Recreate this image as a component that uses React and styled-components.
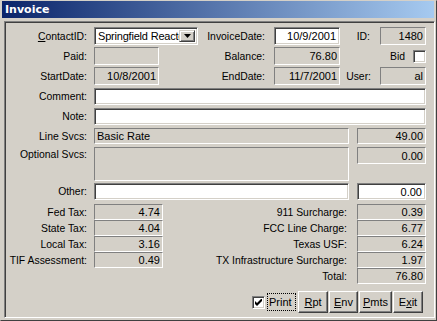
import React from "react";
import styled, { createGlobalStyle } from "styled-components";

const GlobalStyle = createGlobalStyle`
  html, body { margin: 0; padding: 0; background: #D4D0C8; }
  body { font-family: "Liberation Sans", Arial, sans-serif; font-size: 11px; color: #000; }
  * { box-sizing: border-box; }
`;

const Window = styled.div`
  width: 437px;
  height: 321px;
  background: #d4d0c8;
  border-style: solid;
  border-width: 1px;
  border-color: #d4d0c8 #404040 #404040 #d4d0c8;
  padding: 0 1px 2px 1px;
  display: flex;
  flex-direction: column;
`;

const TitleBar = styled.div`
  height: 17px;
  flex: none;
  margin-right: 1px;
  background: linear-gradient(to right, #0a246a, #a6caf0);
  color: #fff;
  font-family: "DejaVu Sans", Tahoma, sans-serif;
  font-weight: bold;
  font-size: 11px;
  display: flex;
  align-items: center;
  padding-left: 3px;
`;

const Panel = styled.div`
  margin: 3px 0 0 2px;
  height: 297px;
  width: 431px;
  flex: none;
  border: 1px solid;
  border-color: #808080 #fff #fff #808080;
  box-shadow: inset 1px 1px #404040, inset -1px -1px #d4d0c8;
  padding: 5px 0 0 1px;
  display: flex;
  flex-direction: column;
`;

const Row = styled.div`
  display: flex;
  align-items: ${(p) => (p.$top ? "flex-start" : "center")};
  height: ${(p) => p.$h}px;
  margin-top: ${(p) => p.$mt || 0}px;
  flex: none;
`;

const Label = styled.div`
  flex: none;
  width: ${(p) => p.$w}px;
  margin-right: ${(p) => p.$gap}px;
  height: ${(p) => (p.$lh ? `${p.$lh}px` : "auto")};
  line-height: ${(p) => (p.$lh ? `${p.$lh}px` : "normal")};
  text-align: right;
  white-space: nowrap;
  font-size: 10.4px;
`;

const Spacer = styled.div`
  flex: none;
  width: ${(p) => p.$w}px;
`;

const Static = styled.div`
  flex: none;
  width: ${(p) => p.$w}px;
  height: ${(p) => (p.$h ? `${p.$h}px` : "100%")};
  background: #d4d0c8;
  border: 1px solid;
  border-color: #808080 #fff #fff #808080;
  display: flex;
  align-items: ${(p) => (p.$top ? "flex-start" : "center")};
  justify-content: ${(p) => (p.$left ? "flex-start" : "flex-end")};
  padding: 0 2px 0 2px;
  white-space: nowrap;
  overflow: hidden;
`;

const Edit = styled.div`
  flex: none;
  width: ${(p) => p.$w}px;
  height: 100%;
  background: #fff;
  border: 1px solid;
  border-color: #808080 #fff #fff #808080;
  box-shadow: inset 1px 1px #404040, inset -1px -1px #d4d0c8;
  display: flex;
  align-items: center;
  justify-content: flex-end;
  padding: 0 3px 0 3px;
  white-space: nowrap;
  overflow: hidden;
`;

const Combo = styled(Edit)`
  justify-content: space-between;
  padding: 2px 2px 2px 3px;
`;

const ComboText = styled.span`
  overflow: hidden;
  white-space: nowrap;
  flex: 1;
  min-width: 0;
  font-size: 11px;
  letter-spacing: -0.2px;
`;

const DropButton = styled.div`
  flex: none;
  width: 16px;
  height: 100%;
  background: #d4d0c8;
  border: 1px solid;
  border-color: #d4d0c8 #404040 #404040 #d4d0c8;
  box-shadow: inset 1px 1px #fff, inset -1px -1px #808080;
  display: flex;
  align-items: center;
  justify-content: center;
`;

const CheckBox = styled.div`
  flex: none;
  width: 13px;
  height: 13px;
  background: #fff;
  border: 1px solid;
  border-color: #808080 #fff #fff #808080;
  box-shadow: inset 1px 1px #404040, inset -1px -1px #d4d0c8;
  display: flex;
  align-items: center;
  justify-content: center;
`;

const ButtonBar = styled.div`
  display: flex;
  align-items: center;
  height: 22px;
  margin-top: 7px;
  padding-left: 246px;
`;

const FocusLabel = styled.div`
  margin-left: 2px;
  margin-right: 2px;
  padding: 2px 1px;
  height: 18px;
  line-height: 13px;
  border: 1px dotted #000;
  width: 29px;
  font-size: 11px;
`;

const Button = styled.div`
  flex: none;
  width: ${(p) => p.$w}px;
  height: 22px;
  margin-left: ${(p) => p.$ml || 0}px;
  background: #d4d0c8;
  border: 1px solid;
  border-color: #fff #404040 #404040 #fff;
  box-shadow: inset -1px -1px #808080, inset 1px 1px #d4d0c8;
  display: flex;
  align-items: center;
  justify-content: center;
  font-size: 11px;
`;

const Arrow = () => (
  <svg width="7" height="4" viewBox="0 0 7 4">
    <path d="M0 0h7L3.5 4z" fill="#000" />
  </svg>
);

const Check = () => (
  <svg width="7" height="7" viewBox="0 0 7 7">
    <path d="M0 2v3l2 2 5-5V-1L2 4z" fill="#000" />
  </svg>
);

const taxRows = [
  ["Fed Tax:", "4.74", "911 Surcharge:", "0.39"],
  ["State Tax:", "4.04", "FCC Line Charge:", "6.77"],
  ["Local Tax:", "3.16", "Texas USF:", "6.24"],
  ["TIF Assessment:", "0.49", "TX Infrastructure Surcharge:", "1.97"],
];

export default function App() {
  return (
    <>
      <GlobalStyle />
      <Window>
        <TitleBar>Invoice</TitleBar>
        <Panel>
          <Row $h={18}>
            <Label $w={81} $gap={7}>
              <u>C</u>ontactID:
            </Label>
            <Combo $w={104}>
              <ComboText>Springfield Reactor</ComboText>
              <DropButton>
                <Arrow />
              </DropButton>
            </Combo>
            <Label $w={67} $gap={9}>InvoiceDate:</Label>
            <Edit $w={66}>10/9/2001</Edit>
            <Label $w={30} $gap={10}>ID:</Label>
            <Static $w={46}>1480</Static>
          </Row>
          <Row $h={18} $mt={2}>
            <Label $w={81} $gap={7}>Paid:</Label>
            <Static $w={65} />
            <Label $w={106} $gap={9}>Balance:</Label>
            <Static $w={66}>76.80</Static>
            <Label $w={65} $gap={8}>Bid</Label>
            <CheckBox />
          </Row>
          <Row $h={18} $mt={2}>
            <Label $w={81} $gap={7}>StartDate:</Label>
            <Static $w={65}>10/8/2001</Static>
            <Label $w={106} $gap={9}>EndDate:</Label>
            <Static $w={66}>11/7/2001</Static>
            <Label $w={31} $gap={9}>User:</Label>
            <Static $w={46}>al</Static>
          </Row>
          <Row $h={17} $mt={3}>
            <Label $w={81} $gap={7}>Comment:</Label>
            <Edit $w={332} />
          </Row>
          <Row $h={17} $mt={3}>
            <Label $w={81} $gap={7}>Note:</Label>
            <Edit $w={332} />
          </Row>
          <Row $h={16} $mt={3}>
            <Label $w={81} $gap={7}>Line Svcs:</Label>
            <Static $w={255} $left>Basic Rate</Static>
            <Spacer $w={8} />
            <Static $w={69}>49.00</Static>
          </Row>
          <Row $h={34} $mt={3} $top>
            <Label $w={81} $gap={7} $lh={16}>Optional Svcs:</Label>
            <Static $w={255} $h={34} />
            <Spacer $w={8} />
            <Static $w={69} $h={17}>0.00</Static>
          </Row>
          <Row $h={17} $mt={2}>
            <Label $w={81} $gap={7}>Other:</Label>
            <Edit $w={255} />
            <Spacer $w={8} />
            <Edit $w={69}>0.00</Edit>
          </Row>
          {taxRows.map(([l1, v1, l2, v2], i) => (
            <Row key={l1} $h={16} $mt={i === 0 ? 4 : 0}>
              <Label $w={81} $gap={7}>{l1}</Label>
              <Static $w={69}>{v1}</Static>
              <Label $w={184} $gap={10}>{l2}</Label>
              <Static $w={69}>{v2}</Static>
            </Row>
          ))}
          <Row $h={16}>
            <Spacer $w={157} />
            <Label $w={184} $gap={10}>Total:</Label>
            <Static $w={69}>76.80</Static>
          </Row>
          <ButtonBar>
            <CheckBox>
              <Check />
            </CheckBox>
            <FocusLabel>Print</FocusLabel>
            <Button $w={30}>
              <span><u>R</u>pt</span>
            </Button>
            <Button $w={29} $ml={1}>
              <span><u>E</u>nv</span>
            </Button>
            <Button $w={33} $ml={1}>
              <span><u>P</u>mts</span>
            </Button>
            <Button $w={30} $ml={1}>
              <span>E<u>x</u>it</span>
            </Button>
          </ButtonBar>
        </Panel>
      </Window>
    </>
  );
}
